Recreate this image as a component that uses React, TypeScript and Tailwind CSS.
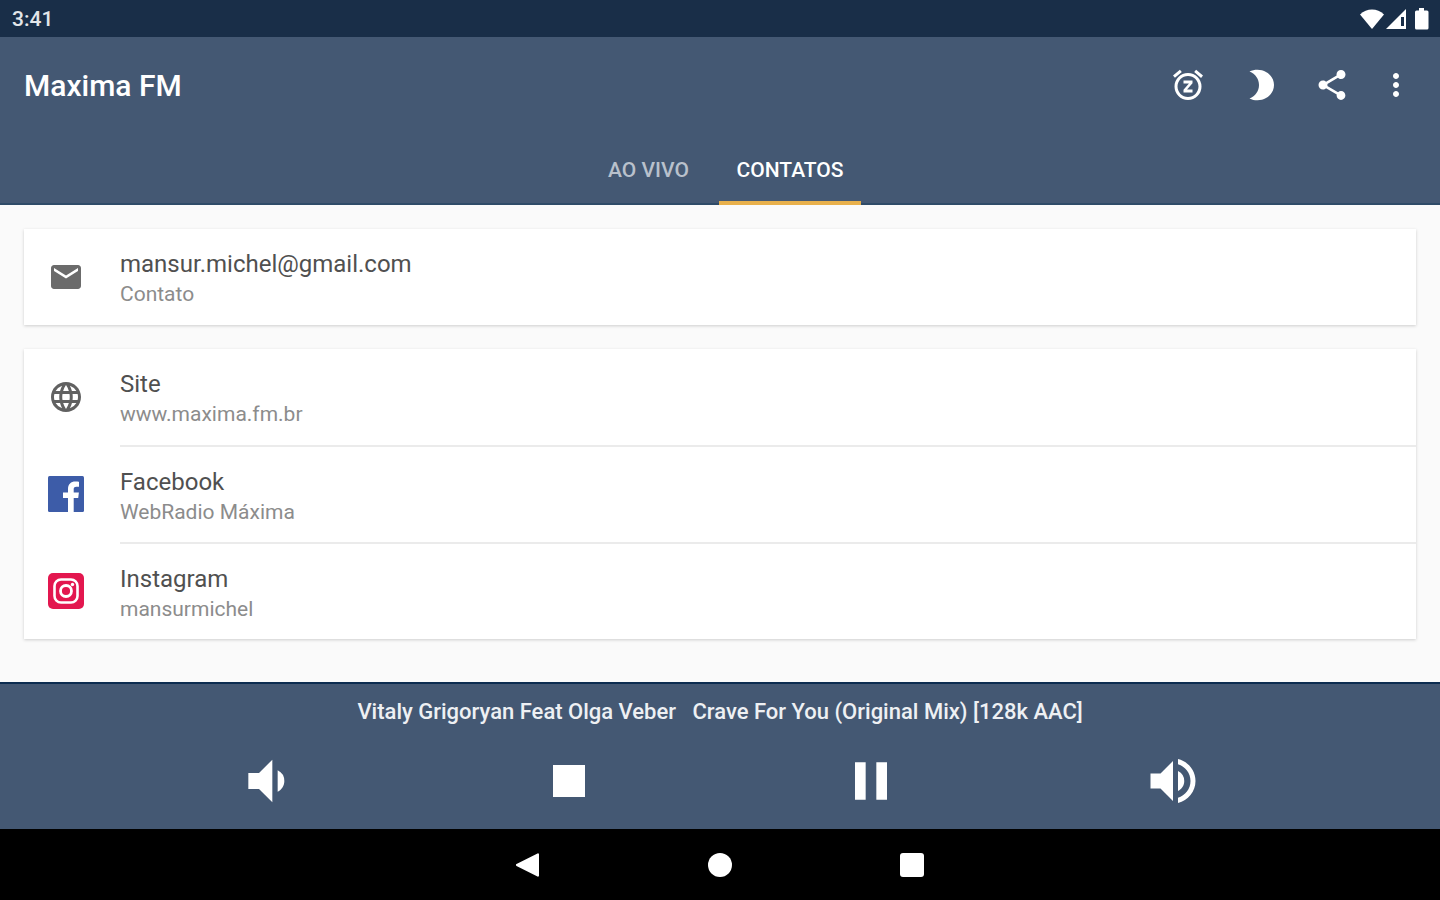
import { useState } from "react";
import type { ReactNode } from "react";
import {
  MdEmail,
  MdLanguage,
  MdMoreVert,
  MdPause,
  MdShare,
  MdSnooze,
  MdStop,
  MdVolumeDown,
  MdVolumeUp,
} from "react-icons/md";

interface Contact {
  title: string;
  detail: string;
  href: string;
  icon: ReactNode;
}

const TABS = ["AO VIVO", "CONTATOS"];

const EMAIL: Contact[] = [
  {
    title: "mansur.michel@gmail.com",
    detail: "Contato",
    href: "mailto:mansur.michel@gmail.com",
    icon: <MdEmail className="size-9 text-[#6b6b6b]" />,
  },
];

const LINKS: Contact[] = [
  {
    title: "Site",
    detail: "www.maxima.fm.br",
    href: "#site",
    icon: <MdLanguage className="size-9 text-[#616161]" />,
  },
  { title: "Facebook", detail: "WebRadio Máxima", href: "#facebook", icon: <FacebookIcon /> },
  { title: "Instagram", detail: "mansurmichel", href: "#instagram", icon: <InstagramIcon /> },
];

export default function App() {
  const [tab, setTab] = useState("CONTATOS");

  return (
    <div className="flex min-h-screen flex-col bg-[#fafafa] font-['Roboto',sans-serif]">
      <StatusBar />

      <header className="border-b-2 border-[#2f4b68] bg-[#445873] text-white">
        <div className="flex h-24 items-center justify-between pr-4 pl-6">
          <h1 className="text-[30px] font-medium">Maxima FM</h1>
          <div className="flex items-center">
            <BarButton label="Soneca">
              <MdSnooze className="size-9" />
            </BarButton>
            <BarButton label="Modo noturno">
              <MoonIcon />
            </BarButton>
            <BarButton label="Compartilhar">
              <MdShare className="size-9" />
            </BarButton>
            <button aria-label="Mais opções" className="flex h-18 w-14 items-center justify-center">
              <MdMoreVert className="size-9" />
            </button>
          </div>
        </div>
        <nav className="flex h-[70px] justify-center">
          {TABS.map((t) => (
            <button
              key={t}
              onClick={() => setTab(t)}
              className={`-mb-0.5 min-w-35 border-b-4 px-[18px] pt-2 text-[21px] font-medium ${
                t === tab ? "border-[#e8b04b] text-white" : "border-transparent text-[#b9c1cc]"
              }`}
            >
              {t}
            </button>
          ))}
        </nav>
      </header>

      <main className="flex grow flex-col gap-6 p-6">
        <ContactCard contacts={EMAIL} />
        <ContactCard contacts={LINKS} />
      </main>

      <Player />
      <SystemNav />
    </div>
  );
}

function StatusBar() {
  return (
    <div className="flex h-[37px] items-center justify-between bg-[#192e48] pr-2 pl-3 text-white">
      <span className="pt-0.5 text-[21px] font-medium text-[#e3e6ea]">3:41</span>
      <div className="flex items-center gap-0.5">
        <svg viewBox="0 0 24 20" className="h-5 w-6" fill="currentColor">
          <path d="M12 20 0 5.500C3.500 2 7.500 .5 12 .5s8.500 1.500 12 5z" />
        </svg>
        <svg viewBox="0 0 20 20" className="size-5" fill="currentColor">
          <path d="M20 0v20H0z" />
          <path d="M15 8h3v9h-3z" fill="#192e48" />
        </svg>
        <svg viewBox="0 0 24 22" className="h-[22px] w-6" fill="currentColor">
          <path d="M11 0h5v2.500h3a1.500 1.500 0 0 1 1.500 1.500v16a1.500 1.500 0 0 1-1.500 1.500H8.500A1.500 1.500 0 0 1 7 20V4a1.500 1.500 0 0 1 1.500-1.500H11z" />
        </svg>
      </div>
    </div>
  );
}

function BarButton({ label, children }: { label: string; children: ReactNode }) {
  return (
    <button aria-label={label} className="flex size-18 items-center justify-center">
      {children}
    </button>
  );
}

function ContactCard({ contacts }: { contacts: Contact[] }) {
  return (
    <ul className="bg-white shadow-[0_1px_3px_rgba(0,0,0,0.18)]">
      {contacts.map((c, i) => (
        <li key={c.title}>
          <a href={c.href} className="flex items-stretch gap-9 pl-6">
            <span className="flex w-9 shrink-0 items-center">{c.icon}</span>
            <span
              className={`flex grow flex-col justify-center pt-0.5 ${
                i > 0 ? "h-[97px] border-t-2 border-[#ebebeb]" : "h-24"
              }`}
            >
              <span className="text-2xl leading-8 text-[#505050]">{c.title}</span>
              <span className="text-[21px] leading-7 text-[#8c8c8c]">{c.detail}</span>
            </span>
          </a>
        </li>
      ))}
    </ul>
  );
}

function Player() {
  return (
    <footer className="border-t-2 border-[#0c2c50] bg-[#445873] text-white">
      <p className="pt-3 text-center text-[22px] leading-8 font-medium whitespace-pre text-[#eef0f3]">
        {"Vitaly Grigoryan Feat Olga Veber   Crave For You (Original Mix) [128k AAC]"}
      </p>
      <div className="grid h-[101px] grid-cols-4 px-[116px] pt-1">
        <PlayerButton label="Diminuir volume">
          <MdVolumeDown className="size-16" />
        </PlayerButton>
        <PlayerButton label="Parar">
          <MdStop className="size-16" />
        </PlayerButton>
        <PlayerButton label="Pausar">
          <MdPause className="size-16" />
        </PlayerButton>
        <PlayerButton label="Aumentar volume">
          <MdVolumeUp className="size-[60px]" />
        </PlayerButton>
      </div>
    </footer>
  );
}

function PlayerButton({ label, children }: { label: string; children: ReactNode }) {
  return (
    <button aria-label={label} className="flex items-center justify-center">
      {children}
    </button>
  );
}

function SystemNav() {
  return (
    <nav className="flex h-[71px] items-center justify-center bg-black text-white">
      <button aria-label="Voltar" className="flex w-48 justify-center">
        <svg viewBox="0 0 26 26" className="size-[26px]" fill="currentColor">
          <path d="M22.500 1.500a1 1 0 0 1 1.500.9v21.200a1 1 0 0 1-1.500.9L1.500 13.900a1 1 0 0 1 0-1.800z" />
        </svg>
      </button>
      <button aria-label="Início" className="flex w-48 justify-center">
        <span className="size-6 rounded-full bg-white" />
      </button>
      <button aria-label="Recentes" className="flex w-48 justify-center">
        <span className="size-6 rounded-[3px] bg-white" />
      </button>
    </nav>
  );
}

function MoonIcon() {
  return (
    <svg viewBox="0 0 36 36" className="size-9" fill="currentColor">
      <path d="M7.500 4.500C10 3.200 12.500 2.700 15.500 2.700 24.500 2.700 32 9.500 32 18s-7.500 15.300-16.500 15.300c-3 0-5.500-.5-8-1.800C13.500 29 17 24 17 18S13.500 7 7.500 4.500z" />
    </svg>
  );
}

function FacebookIcon() {
  return (
    <svg viewBox="0 0 36 36" className="size-9">
      <rect width="36" height="36" rx="1.500" fill="#3d5ca8" />
      <path
        d="M20 36V22h-5v-5.500h5V13c0-5 3-7.500 7.300-7.500 1.600 0 3 .1 3.700.2v5h-2.600c-2.200 0-2.700 1-2.700 2.600v3.200h5.200L30.200 22h-4.500v14z"
        fill="#fff"
      />
    </svg>
  );
}

function InstagramIcon() {
  return (
    <svg viewBox="0 0 36 36" className="size-9">
      <rect width="36" height="36" rx="5" fill="#e3174f" />
      <g fill="none" stroke="#fff">
        <rect x="6.500" y="6.500" width="23" height="23" rx="6.500" strokeWidth="2.600" />
        <circle cx="18" cy="18" r="5.500" strokeWidth="2.800" />
      </g>
      <circle cx="24.500" cy="11.500" r="1.700" fill="#fff" />
    </svg>
  );
}
